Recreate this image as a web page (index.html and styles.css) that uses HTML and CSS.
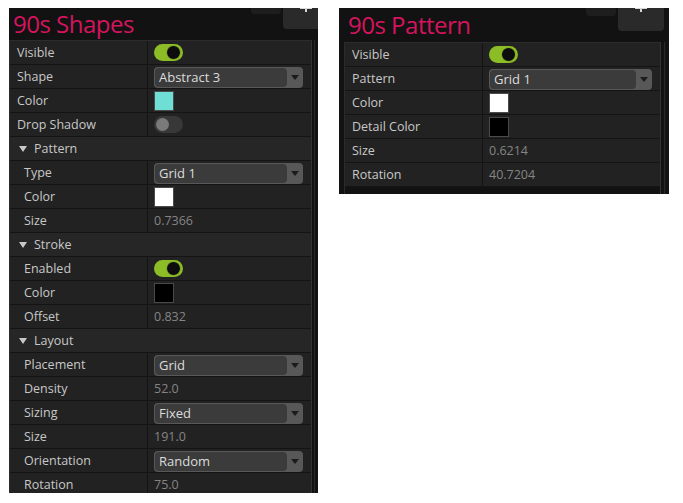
FILE: index.html
```html
<!DOCTYPE html>
<html lang="en">
  <head>
    <meta charset="UTF-8" />
    <title>90s Inspector</title>
    <link rel="stylesheet" href="styles.css">
  </head>
  <body>
    <div class="desk">
      <!-- shapes panel -->
      <div class="panel shapes">
        <div class="tab-small"></div>
        <div class="tab-big"></div>
        <h1>90s Shapes</h1>
        <div class="body">
          <div class="table">
            <div class="row"><div class="label">Visible</div><div class="value"><span class="toggle on"></span></div></div>
            <div class="row"><div class="label">Shape</div><div class="value"><div class="select"><span>Abstract 3</span><i></i></div></div></div>
            <div class="row"><div class="label">Color</div><div class="value"><span class="swatch" style="background:#6fded5"></span></div></div>
            <div class="row"><div class="label">Drop Shadow</div><div class="value"><span class="toggle"></span></div></div>
            <div class="section"><b></b>Pattern</div>
            <div class="row sub"><div class="label">Type</div><div class="value"><div class="select"><span>Grid 1</span><i></i></div></div></div>
            <div class="row sub"><div class="label">Color</div><div class="value"><span class="swatch" style="background:#fff"></span></div></div>
            <div class="row sub"><div class="label">Size</div><div class="value num">0.7366</div></div>
            <div class="section"><b></b>Stroke</div>
            <div class="row sub"><div class="label">Enabled</div><div class="value"><span class="toggle on"></span></div></div>
            <div class="row sub"><div class="label">Color</div><div class="value"><span class="swatch" style="background:#000"></span></div></div>
            <div class="row sub"><div class="label">Offset</div><div class="value num">0.832</div></div>
            <div class="section"><b></b>Layout</div>
            <div class="row sub"><div class="label">Placement</div><div class="value"><div class="select"><span>Grid</span><i></i></div></div></div>
            <div class="row sub"><div class="label">Density</div><div class="value num">52.0</div></div>
            <div class="row sub"><div class="label">Sizing</div><div class="value"><div class="select"><span>Fixed</span><i></i></div></div></div>
            <div class="row sub"><div class="label">Size</div><div class="value num">191.0</div></div>
            <div class="row sub"><div class="label">Orientation</div><div class="value"><div class="select"><span>Random</span><i></i></div></div></div>
            <div class="row sub"><div class="label">Rotation</div><div class="value num">75.0</div></div>
          </div>
          <div class="scroll"></div>
        </div>
      </div>

      <!-- pattern panel -->
      <div class="panel pattern">
        <div class="tab-small"></div>
        <div class="tab-big"></div>
        <h1>90s Pattern</h1>
        <div class="body">
          <div class="table">
            <div class="row"><div class="label">Visible</div><div class="value"><span class="toggle on"></span></div></div>
            <div class="row"><div class="label">Pattern</div><div class="value"><div class="select"><span>Grid 1</span><i></i></div></div></div>
            <div class="row"><div class="label">Color</div><div class="value"><span class="swatch" style="background:#fff"></span></div></div>
            <div class="row"><div class="label">Detail Color</div><div class="value"><span class="swatch" style="background:#000"></span></div></div>
            <div class="row"><div class="label">Size</div><div class="value num">0.6214</div></div>
            <div class="row"><div class="label">Rotation</div><div class="value num">40.7204</div></div>
          </div>
          <div class="scroll"></div>
        </div>
      </div>
    </div>
  </body>
</html>
```

FILE: styles.css
```css
body {
  margin: 0;
  background: #fff;
  font-family: "Open Sans", "Noto Sans", sans-serif;
  font-size: 12.5px;
}
.desk {
  display: flex;
  align-items: flex-start;
  gap: 21px;
  padding: 8px 0 0 9px;
}
.panel {
  position: relative;
  background: #121212;
  overflow: hidden;
}
.shapes {
  width: 309px;
  height: 485px;
}
.pattern {
  width: 330px;
  height: 186px;
}
.tab-small {
  position: absolute;
  top: -4px;
  height: 10px;
  width: 30px;
  background: #1e1e1e;
  border-radius: 4px;
}
.tab-big {
  position: absolute;
  top: -6px;
  height: 27px;
  width: 46px;
  background: #2a2a2a;
  border-radius: 4px;
}
/* stub of the "+" that sits above the visible edge */
.tab-big::after {
  content: "";
  position: absolute;
  left: 22px;
  top: 6px;
  width: 2px;
  height: 4px;
  background: #d8d8d8;
}
.tab-big::before {
  content: "";
  position: absolute;
  left: 17px;
  top: 5px;
  width: 12px;
  height: 2px;
  background: #d8d8d8;
}
.shapes .tab-small { left: 242px; }
.shapes .tab-big { left: 274px; }
.pattern .tab-small { left: 247px; top: -2px; }
.pattern .tab-big { left: 279px; height: 29px; }
h1 {
  margin: 0;
  height: 32px;
  padding-left: 4px;
  color: #d5145e;
  font-weight: normal;
  font-size: 24px;
  letter-spacing: -0.5px;
  line-height: 31px;
  white-space: nowrap;
}
.pattern h1 {
  height: 34px;
  padding-left: 9px;
  line-height: 33px;
}
.body {
  display: flex;
}
.pattern .body {
  padding-left: 5px;
}
.table {
  flex: none;
  border-top: 1px solid #2c2c2c;
  border-left: 1px solid #2c2c2c;
  border-right: 1px solid #333;
}
.shapes .table { width: 301px; }
.pattern .table { width: 315px; }
.scroll {
  flex: none;
  width: 3px;
  margin-left: 2px;
  height: 460px;
  border-left: 1px solid #2a2a2a;
}
.pattern .scroll {
  margin-left: 3px;
  height: 160px;
}
.row {
  display: flex;
  height: 23px;
  border-bottom: 1px solid #141414;
  background: #222;
  color: #c8c8c8;
}
.label {
  width: 130px;
  flex: none;
  padding-left: 7px;
  line-height: 23px;
  border-right: 1px solid #141414;
  white-space: nowrap;
}
.sub .label {
  padding-left: 14px;
  width: 123px;
}
.value {
  flex: 1;
  display: flex;
  align-items: center;
  padding-left: 6px;
  padding-right: 8px;
}
.num {
  color: #858585;
}
.section {
  height: 23px;
  line-height: 23px;
  border-bottom: 1px solid #141414;
  background: #262626;
  color: #c8c8c8;
  padding-left: 9px;
  display: flex;
  align-items: center;
}
.section b {
  width: 0;
  height: 0;
  border-left: 4px solid transparent;
  border-right: 4px solid transparent;
  border-top: 6px solid #c8c8c8;
  margin-right: 7px;
  margin-top: 1px;
}
.toggle {
  position: relative;
  width: 29px;
  height: 17px;
  border-radius: 9px;
  background: #383838;
}
.toggle::after {
  content: "";
  position: absolute;
  left: 2px;
  top: 2px;
  width: 13px;
  height: 13px;
  border-radius: 50%;
  background: #7a7a7a;
}
.toggle.on {
  background: #8dbd26;
}
.toggle.on::after {
  left: 12px;
  top: 1px;
  width: 13px;
  height: 13px;
  background: #0d0d0d;
  border: 1px solid #8dbd26;
  box-shadow: 0 0 0 1px #0d0d0d inset;
}
.swatch {
  width: 18px;
  height: 18px;
  border: 1px solid #4a4a4a;
}
.select {
  flex: 1;
  display: flex;
  height: 21px;
  border-radius: 4px;
  background: #585858;
  margin-top: 1px;
}
.select span {
  flex: 1;
  margin: 1px 0 1px 1px;
  border-radius: 4px;
  background: #3b3b3b;
  color: #dcdcdc;
  padding-left: 4px;
  line-height: 19px;
  font-size: 13px;
}
.select i {
  width: 16px;
  position: relative;
}
.select i::after {
  content: "";
  position: absolute;
  left: 4px;
  top: 8px;
  border-left: 4px solid transparent;
  border-right: 4px solid transparent;
  border-top: 5px solid #1c1c1c;
}
```
